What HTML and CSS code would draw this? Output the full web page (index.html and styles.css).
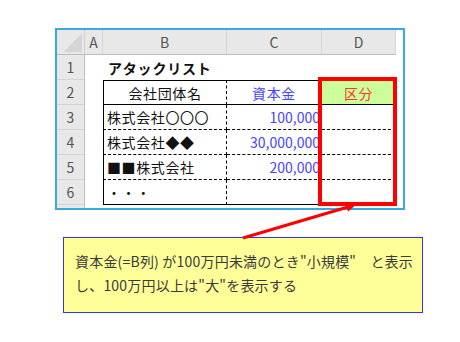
FILE: index.html
```html
<!DOCTYPE html>
<html lang="ja">
<head>
  <meta charset="UTF-8">
  <title>アタックリスト</title>
  <link rel="stylesheet" href="styles.css">
</head>
<body>
  <div class="sheet">
    <!-- column headers -->
    <div class="corner"></div>
    <div class="colhead">A</div>
    <div class="colhead">B</div>
    <div class="colhead">C</div>
    <div class="colhead">D</div>
    <div class="blank"></div>

    <!-- row 1 -->
    <div class="rowhead">1</div>
    <div class="cell"></div>
    <div class="cell title">アタックリスト</div>
    <div class="cell"></div>
    <div class="cell"></div>
    <div class="blank"></div>

    <!-- row 2 -->
    <div class="rowhead">2</div>
    <div class="cell"></div>
    <div class="cell colb top bottom center">会社団体名</div>
    <div class="cell colc top bottom center blue">資本金</div>
    <div class="cell cold top bottom center green red">区分<div class="mark"></div></div>
    <div class="blank"></div>

    <!-- row 3 -->
    <div class="rowhead">3</div>
    <div class="cell"></div>
    <div class="cell colb dash">株式会社〇〇〇</div>
    <div class="cell colc dash num">100,000</div>
    <div class="cell cold dash"></div>
    <div class="blank"></div>

    <!-- row 4 -->
    <div class="rowhead">4</div>
    <div class="cell"></div>
    <div class="cell colb dash">株式会社◆◆</div>
    <div class="cell colc dash num">30,000,000</div>
    <div class="cell cold dash"></div>
    <div class="blank"></div>

    <!-- row 5 -->
    <div class="rowhead">5</div>
    <div class="cell"></div>
    <div class="cell colb dash">■■株式会社</div>
    <div class="cell colc dash num">200,000</div>
    <div class="cell cold dash"></div>
    <div class="blank"></div>

    <!-- row 6 -->
    <div class="rowhead">6</div>
    <div class="cell"></div>
    <div class="cell colb bottom">・・・</div>
    <div class="cell colc bottom"></div>
    <div class="cell cold bottom"></div>
    <div class="blank"></div>

    <!-- bottom strip -->
    <div class="rowhead end"></div>
  </div>

  <div class="note">
    資本金(=B列) が100万円未満のとき"小規模"　と表示<br>
    し、100万円以上は"大"を表示する
  </div>

  <svg class="arrow" width="460" height="342" viewBox="0 0 460 342">
    <line x1="243" y1="238" x2="348" y2="207" stroke="#ff0000" stroke-width="3"/>
    <polygon points="357,204 348,211.5 345,202.5" fill="#ff0000"/>
  </svg>
</body>
</html>
```

FILE: styles.css
```css
body {
  margin: 0;
  background: #fff;
  font-family: "Noto Sans CJK JP", sans-serif;
  position: relative;
  width: 460px;
  height: 342px;
  overflow: hidden;
}

.sheet {
  margin: 28px 0 0 55px;
  width: 346px;
  height: 178px;
  border: 2px solid #3aaadc;
  display: grid;
  grid-template-columns: 28px 18px 124px 95px 74px 7px;
  grid-template-rows: repeat(7, 25px) 3px;
  background: #fff;
}

.corner,
.colhead,
.rowhead {
  background: #e8e8e8;
  color: #555;
  font-size: 14px;
  display: flex;
  align-items: center;
  justify-content: center;
  box-sizing: border-box;
}

.corner {
  position: relative;
  border-right: 1px solid #cfcfcf;
  border-bottom: 1px solid #bdbdbd;
}

.corner::after {
  content: "";
  position: absolute;
  right: 2px;
  bottom: 2px;
  width: 19px;
  height: 19px;
  background: linear-gradient(to bottom right, transparent 50%, #d5d5d5 50%);
}

.colhead {
  border-right: 1px solid #d4d4d4;
  border-bottom: 1px solid #bdbdbd;
}

.rowhead {
  border-right: 1px solid #bdbdbd;
  border-bottom: 1px solid #d4d4d4;
}

.rowhead.end {
  border-bottom: none;
}

.cell {
  box-sizing: border-box;
  font-size: 14px;
  letter-spacing: 0.6px;
  color: #111;
  display: flex;
  align-items: center;
  padding: 0 3px;
  white-space: nowrap;
}

.title {
  font-weight: bold;
  padding-left: 5px;
  letter-spacing: 0.8px;
}

/* table borders */
.colb { border-left: 1px solid #000; border-right: 1px dashed #000; }
.colc { border-right: 1px dashed #000; }
.cold { border-right: 1px solid #000; }
.top { border-top: 1px solid #000; }
.bottom { border-bottom: 1px solid #000; }
.dash { border-bottom: 1px dashed #000; }

.center { justify-content: center; }
.num {
  justify-content: flex-end;
  padding-right: 1px;
  color: #4545ff;
  letter-spacing: 0;
}
.blue { color: #4545ff; }
.green { background: #ccff99; position: relative; }
.red { color: #ff3333; }

/* red frame over D2:D6 */
.mark {
  position: absolute;
  left: -4px;
  top: -4px;
  width: 79px;
  height: 129px;
  box-sizing: border-box;
  border: 4px solid #ff0000;
  pointer-events: none;
}

.note {
  margin: 27px 0 0 63px;
  width: 360px;
  height: 76px;
  box-sizing: border-box;
  border: 1.5px solid #3333ff;
  background: #ffff99;
  color: #3a3a3a;
  font-size: 14px;
  letter-spacing: 0.2px;
  line-height: 24px;
  padding: 11px 0 0 11px;
  white-space: nowrap;
}

.arrow {
  position: absolute;
  left: 0;
  top: 0;
  pointer-events: none;
}
```
